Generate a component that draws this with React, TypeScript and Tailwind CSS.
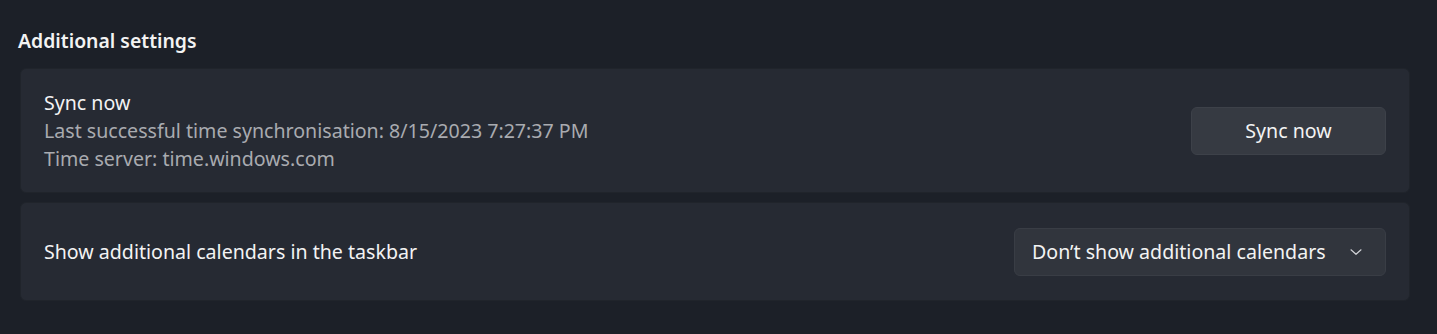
import React from "react";

export default function App() {
  return (
    <div
      className="w-[1437px] h-[334px] bg-[#1c2028] text-white overflow-hidden"
      style={{ fontFamily: '"Noto Sans", "Open Sans", sans-serif' }}
    >
      <div className="pl-[18px] pr-[27px] pt-[28px]">
        <h2 className="text-[19.4px] leading-[26px] font-semibold text-[#f3f3f3] mb-[14px]">
          Additional settings
        </h2>
        <div className="ml-[2px] flex flex-col gap-[9px]">
          <div className="h-[125px] rounded-[6px] bg-[#262a33] border border-[#20242b] flex items-center justify-between pl-[23px] pr-[23px]">
            <div className="flex flex-col text-[19.6px] leading-[28px]">
              <span className="text-[#f3f3f3]">Sync now</span>
              <span className="text-[#a9abb0]">Last successful time synchronisation: 8/15/2023 7:27:37 PM</span>
              <span className="text-[#a9abb0]">Time server: time.windows.com</span>
            </div>
            <button className="w-[195px] h-[48px] rounded-[6px] bg-[#363a42] border border-[#3d4149] text-[19.6px] text-[#f3f3f3] flex items-center justify-center">
              Sync now
            </button>
          </div>
          <div className="h-[99px] rounded-[6px] bg-[#262a33] border border-[#20242b] flex items-center justify-between pl-[23px] pr-[23px]">
            <span className="text-[19.6px] text-[#f3f3f3]">Show additional calendars in the taskbar</span>
            <button className="w-[372px] h-[48px] rounded-[6px] bg-[#31353d] border border-[#393d45] text-[19.6px] text-[#f3f3f3] flex items-center justify-between pl-[17px] pr-[22px]">
              <span>Don’t show additional calendars</span>
              <svg width="14" height="14" viewBox="0 0 14 14" fill="none">
                <path d="M2 4.8 L7 9.3 L12 4.8" stroke="#d0d2d6" strokeWidth="1.2" strokeLinecap="round" strokeLinejoin="round" />
              </svg>
            </button>
          </div>
        </div>
      </div>
    </div>
  );
}
